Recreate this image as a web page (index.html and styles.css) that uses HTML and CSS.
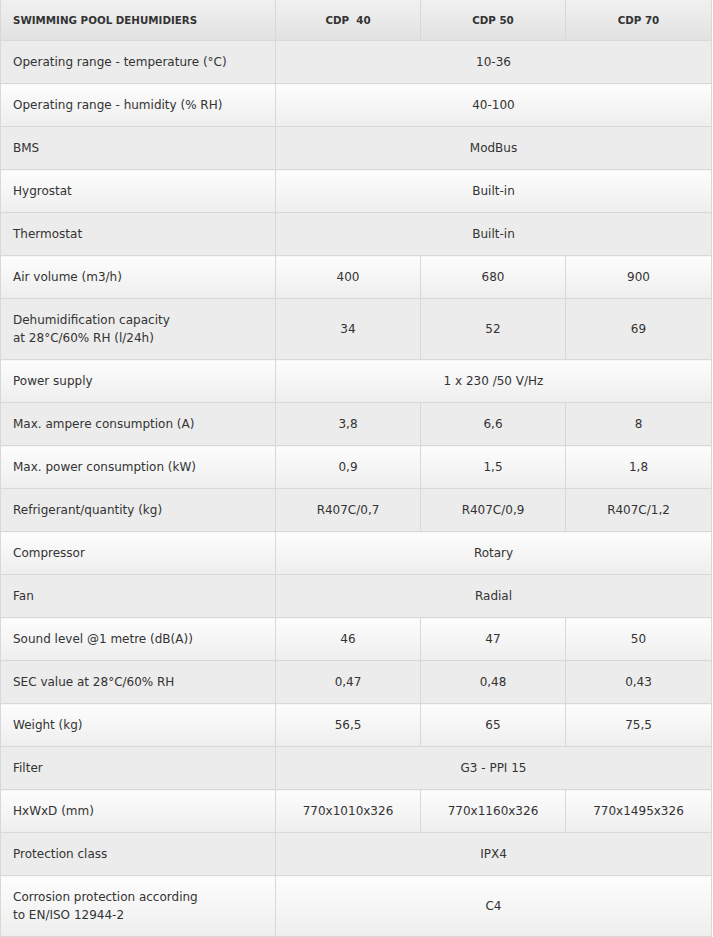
FILE: index.html
```html
<!DOCTYPE html>
<html>
<head>
<meta charset="utf-8">
<link rel="stylesheet" href="styles.css">
</head>
<body>
<table class="spec">
  <colgroup>
    <col class="c-label"><col class="c-val"><col class="c-val"><col class="c-last">
  </colgroup>
  <thead>
    <tr><th class="lbl">SWIMMING POOL DEHUMIDIERS</th><th>CDP&nbsp; 40</th><th>CDP 50</th><th>CDP 70</th></tr>
  </thead>
  <tbody>
    <tr><td class="lbl">Operating range - temperature (°C)</td><td colspan="3">10-36</td></tr>
    <tr><td class="lbl">Operating range - humidity (% RH)</td><td colspan="3">40-100</td></tr>
    <tr><td class="lbl">BMS</td><td colspan="3">ModBus</td></tr>
    <tr><td class="lbl">Hygrostat</td><td colspan="3">Built-in</td></tr>
    <tr><td class="lbl">Thermostat</td><td colspan="3">Built-in</td></tr>
    <tr><td class="lbl">Air volume (m3/h)</td><td>400</td><td>680</td><td>900</td></tr>
    <tr><td class="lbl">Dehumidification capacity<br>at 28°C/60% RH (l/24h)</td><td>34</td><td>52</td><td>69</td></tr>
    <tr><td class="lbl">Power supply</td><td colspan="3">1 x 230 /50 V/Hz</td></tr>
    <tr><td class="lbl">Max. ampere consumption (A)</td><td>3,8</td><td>6,6</td><td>8</td></tr>
    <tr><td class="lbl">Max. power consumption (kW)</td><td>0,9</td><td>1,5</td><td>1,8</td></tr>
    <tr><td class="lbl">Refrigerant/quantity (kg)</td><td>R407C/0,7</td><td>R407C/0,9</td><td>R407C/1,2</td></tr>
    <tr><td class="lbl">Compressor</td><td colspan="3">Rotary</td></tr>
    <tr><td class="lbl">Fan</td><td colspan="3">Radial</td></tr>
    <tr><td class="lbl">Sound level @1 metre (dB(A))</td><td>46</td><td>47</td><td>50</td></tr>
    <tr><td class="lbl">SEC value at 28°C/60% RH</td><td>0,47</td><td>0,48</td><td>0,43</td></tr>
    <tr><td class="lbl">Weight (kg)</td><td>56,5</td><td>65</td><td>75,5</td></tr>
    <tr><td class="lbl">Filter</td><td colspan="3">G3 - PPI 15</td></tr>
    <tr><td class="lbl">HxWxD (mm)</td><td>770x1010x326</td><td>770x1160x326</td><td>770x1495x326</td></tr>
    <tr><td class="lbl">Protection class</td><td colspan="3">IPX4</td></tr>
    <tr><td class="lbl">Corrosion protection according<br>to EN/ISO 12944-2</td><td colspan="3">C4</td></tr>
  </tbody>
</table>
</body>
</html>
```
FILE: styles.css
```css
html, body {
  margin: 0;
  padding: 0;
  background: #ffffff;
}
.spec {
  width: 711px;
  border-collapse: collapse;
  table-layout: fixed;
  font-family: "DejaVu Sans", Verdana, sans-serif;
  font-size: 12px;
  line-height: 18px;
  color: #333333;
}
.c-label { width: 275px; }
.c-val { width: 145px; }
.c-last { width: 146px; }
.spec th,
.spec td {
  border: 1px solid #d8d8d8;
  padding: 12px 12px;
  text-align: center;
  vertical-align: middle;
  font-weight: normal;
}
.spec .lbl { text-align: left; }
.spec thead th {
  background: linear-gradient(#f0f0f0, #e2e2e2);
  font-size: 10.3px;
  font-weight: bold;
  line-height: 16px;
  padding: 12px 12px 12px;
  border-top: none;
}
.spec tbody tr:nth-child(odd) td {
  background: #ececec;
}
.spec tbody tr:nth-child(even) td {
  background: linear-gradient(#fdfdfd, #eeeeee);
}
```
